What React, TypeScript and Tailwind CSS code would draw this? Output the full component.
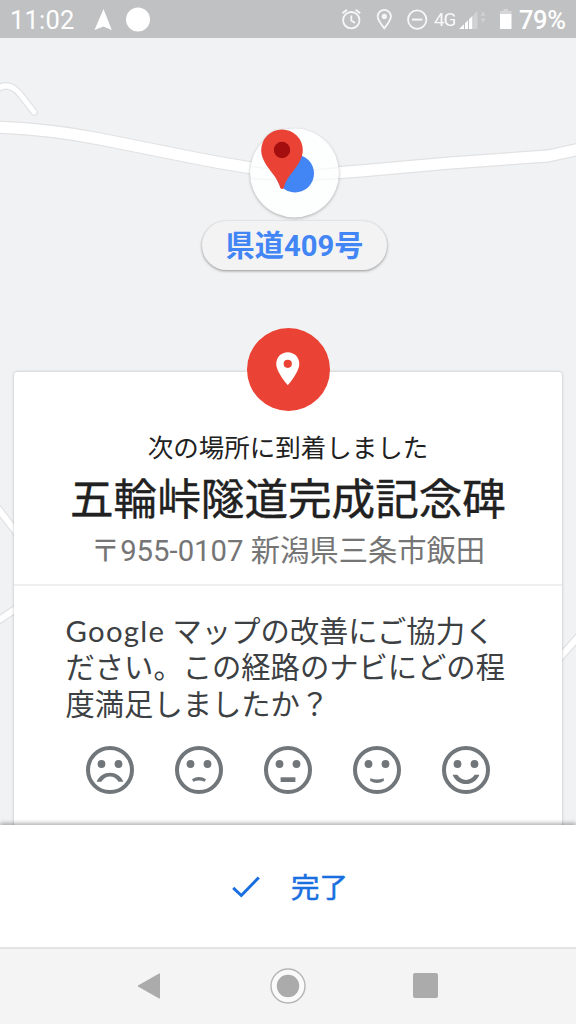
import React from 'react';

const roads = [
  { d: 'M-4 90 Q8 80 20 94 L34 112', width: 5 },
  { d: 'M-4 127 Q50 129 100 139 L190 157 Q260 171 300 173 Q330 174 360 171 L450 163 L548 156 L580 149', width: 11 },
  { d: 'M-4 506 L20 537', width: 6 },
  { d: 'M-4 622 L20 606', width: 6 },
  { d: 'M556 662 L580 635', width: 6 },
];

const mouths = [
  'M-13.3 11.7 C-8.5 -0.2 8.5 -0.2 13.3 11.7 H8.6 C4.5 4.7 -4.5 4.7 -8.6 11.7 Z',
  'M-7 9.2 Q0 4.8 7 9.2 L5.6 11.7 Q0 9.1 -5.6 11.7 Z',
  'M-7.4 7.3 H7.4 V12 H-7.4 Z',
  'M-6.6 8.2 Q0 11 6.6 8.2 L7 10.8 Q0 15.4 -7 10.8 Z',
  'M-13.4 4.8 H-8.7 C-4.5 11.6 4.5 11.6 8.7 4.8 H13.4 C8.5 17.2 -8.5 17.2 -13.4 4.8 Z',
];

const PLACE = 'M12 2C8.13 2 5 5.13 5 9c0 5.25 7 13 7 13s7-7.75 7-13c0-3.87-3.13-7-7-7z';

function StatusBar() {
  return (
    <header className="relative flex h-[38px] shrink-0 items-center bg-[#c0c1c3] pl-[10px] text-white">
      <span className="w-[83px] pt-[3px] text-[25.5px] leading-none tracking-[0.2px]">11:02</span>
      <svg className="h-[38px] w-[70px]" viewBox="93 0 70 38" fill="#fff">
        <path d="M103.5 9 L111.8 30 L103.3 26.5 L94.5 30 Z" />
        <circle cx="138" cy="19.4" r="12" />
      </svg>
      <svg className="ml-auto h-[38px] w-[94px]" viewBox="337 0 94 38" fill="none" stroke="#f7f7f7" strokeWidth="1.8">
        <circle cx="351.3" cy="20.2" r="8.2" />
        <path d="M351.3 15.5 V20.5 L355 23" />
        <path d="M342.5 13.3 L347 9.8 M360.2 13.3 L355.7 9.8" strokeWidth="2" />
        <path d="M384.3 28.3 C380.5 23.5 377.7 20 377.7 16.5 A6.6 6.6 0 0 1 390.9 16.5 C390.9 20 388.1 23.5 384.3 28.3 Z" />
        <circle cx="384.3" cy="16.4" r="2.6" fill="#f7f7f7" stroke="none" />
        <circle cx="417.2" cy="19.6" r="9.2" />
        <path d="M412 19.6 H422.4" strokeWidth="2" />
      </svg>
      <span className="ml-[3px] w-[22px] pt-[1px] text-[19px] leading-none tracking-[-1.2px] opacity-90">4G</span>
      <svg className="ml-px h-[38px] w-[60px]" viewBox="457 0 60 38" fill="#fff">
        <path d="M459 29 L464 24.2 V29 Z M465 29 V23.2 L468 20.3 V29 Z M469 29 V19.3 L472.4 16 V29 Z" />
        <path d="M473.2 29 V15.2 L477.5 10.5 V29 Z" opacity="0.28" />
        <path d="M483 11.2 L485.5 15.8 H480.7 Z M480.7 18.5 H485.5 L483 23 Z" opacity="0.28" />
        <path d="M503.5 9 H508 V11 H511.5 V14.5 H500 V11 H503.5 Z" opacity="0.35" />
        <rect x="500" y="14" width="11.5" height="15" />
      </svg>
      <span className="ml-[2px] w-[57px] pt-[3px] text-[25.5px] font-medium leading-none tracking-[-0.4px]">79%</span>
    </header>
  );
}

function CurrentPosition() {
  return (
    <div className="ml-[13px] flex flex-col items-center">
      <svg className="h-[90px] w-[90px] overflow-visible drop-shadow-[0_1.5px_1.5px_rgba(0,0,0,0.28)]" viewBox="250 127.5 90 90">
        <circle cx="294.5" cy="172.5" r="44.5" fill="#fdfefe" />
        <path d="M251 166 Q294 173 338 167 M251 178 Q294 182 338 178" fill="none" stroke="#f4f5f6" />
        <circle cx="295" cy="173" r="19" fill="#4285f4" />
        <path
          d="M282 188.5 C280.5 188.5 280 187 279.5 185 C276.5 174 261.2 164 261.2 149.5 A20.8 20.6 0 0 1 302.8 149.5 C302.8 164 287.5 174 284.5 185 C284 187 283.5 188.5 282 188.5 Z"
          fill="#ea4335"
        />
        <circle cx="282" cy="149.5" r="8.2" fill="#a50e0e" />
      </svg>
      <div className="mt-[3.5px] flex h-[49px] w-[185px] items-center justify-center rounded-full bg-[#f3f3f4] pt-[3px] text-[29.2px] font-bold leading-none text-[#4285f4] shadow-[0_1px_3px_rgba(0,0,0,0.4)]">
        県道409号
      </div>
    </div>
  );
}

function Face({ mouth }: { mouth: string }) {
  return (
    <button className="h-[50px] w-[50px]">
      <svg viewBox="-25 -25 50 50" fill="#71767a">
        <circle r="22" fill="none" stroke="#71767a" strokeWidth="4" />
        <circle cx="-8.5" cy="-6" r="3.9" />
        <circle cx="8.5" cy="-6" r="3.9" />
        <path d={mouth} />
      </svg>
    </button>
  );
}

function ArrivalCard() {
  return (
    <section className="relative mx-[14px] mt-[102px] flex h-[460px] flex-col items-center rounded-t-[3px] bg-white shadow-[0_0_3px_rgba(0,0,0,0.25)]">
      <div className="-mt-[44.5px] flex h-[83px] w-[83px] shrink-0 items-center justify-center rounded-full bg-[#ea4335]">
        <svg className="h-[39.5px] w-[39.5px]" viewBox="0 0 24 24">
          <path d={PLACE} fill="#fff" />
          <circle cx="12" cy="9" r="2.5" fill="#ea4335" />
        </svg>
      </div>
      <p className="mt-[19.5px] whitespace-nowrap text-[25.5px] leading-[36px] text-[#212121]">次の場所に到着しました</p>
      <h1 className="mt-[5px] whitespace-nowrap text-[43.6px] leading-[60px] text-[#212121] [-webkit-text-stroke:0.4px_#212121]">五輪峠隧道完成記念碑</h1>
      <p className="whitespace-nowrap text-[29.3px] leading-[40px] text-[#757575]">〒955-0107 新潟県三条市飯田</p>
      <div className="mt-[13px] h-[2px] w-full bg-[#eeeff0]" />
      <p className="mt-[26.5px] w-[445px] whitespace-nowrap text-[29.3px] leading-[36.7px] text-[#3c4043]">
        <span className="font-[Lato] tracking-[1.3px]">Google</span> マップの改善にご協力く
        <br />
        ださい。この経路のナビにどの程
        <br />
        度満足しましたか？
      </p>
      <div className="mt-[21px] flex gap-[39px]">
        {mouths.map((mouth, i) => (
          <Face key={i} mouth={mouth} />
        ))}
      </div>
    </section>
  );
}

export default function App() {
  return (
    <div className="flex h-[1024px] w-[576px] flex-col overflow-hidden font-['Roboto','Noto_Sans_CJK_JP',sans-serif]">
      <StatusBar />
      <main className="relative h-[787px] shrink-0 overflow-hidden bg-[#f1f2f4] pt-[89.5px]">
        <svg className="absolute left-0 top-0 h-[787px] w-[576px]" viewBox="0 38 576 787" fill="none" strokeLinecap="round" strokeLinejoin="round">
          {roads.map((road) => (
            <g key={road.d}>
              <path d={road.d} stroke="#e1e2e4" strokeWidth={road.width + 2.5} />
              <path d={road.d} stroke="#fff" strokeWidth={road.width} />
            </g>
          ))}
        </svg>
        <div className="relative">
          <CurrentPosition />
          <ArrivalCard />
        </div>
      </main>
      <button className="relative flex h-[122px] shrink-0 items-center justify-center gap-[31px] bg-white pl-[4px] pt-[2px] text-[28.5px] leading-none text-[#1a6fe0] shadow-[0_-2px_4px_rgba(0,0,0,0.3)]">
        <svg className="h-[24px] w-[28px]" viewBox="0 0 28 24" fill="none" stroke="currentColor" strokeWidth="3">
          <path d="M1.2 12.8 L9.3 20.5 L26.8 2.5" />
        </svg>
        <span className="pt-[5px] [-webkit-text-stroke:0.5px_#1a6fe0]">完了</span>
      </button>
      <nav className="relative flex h-[77px] items-center justify-between border-t-2 border-[#e3e3e3] bg-[#f4f4f4] pb-[2px] pl-[136px] pr-[138px]">
        <svg className="h-[36px] w-[26px]" viewBox="0 0 26 36">
          <path d="M2 18 L23.5 5.8 V30.2 Z" fill="#ababab" stroke="#ababab" strokeLinejoin="round" />
        </svg>
        <svg className="h-[36px] w-[36px]" viewBox="0 0 36 36">
          <circle cx="18" cy="18" r="17" fill="#fafafa" stroke="#b5b5b5" strokeWidth="1.4" />
          <circle cx="18" cy="18" r="11.2" fill="#ababab" />
        </svg>
        <span className="h-[25px] w-[25px] rounded-[2px] bg-[#ababab]" />
      </nav>
    </div>
  );
}
